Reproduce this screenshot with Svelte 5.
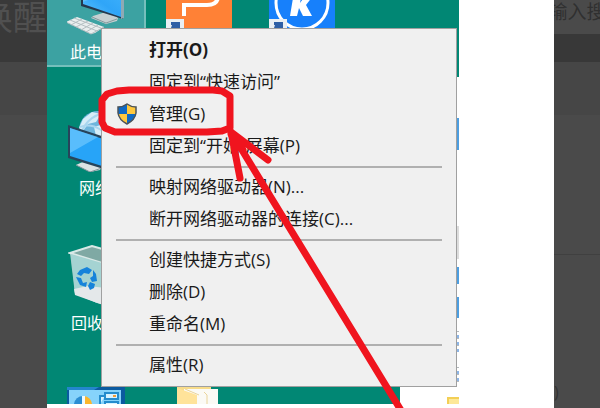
<script>
  /**
   * Context menu groups, a separator is drawn between them
   */
  const groups = [
    [
      { label: '打开(O)', primary: true },
      { label: '固定到“快速访问”' },
      { label: '管理(G)', shield: true },
      { label: '固定到“开始”屏幕(P)' }
    ],
    [{ label: '映射网络驱动器(N)...' }, { label: '断开网络驱动器的连接(C)...' }],
    [{ label: '创建快捷方式(S)' }, { label: '删除(D)' }, { label: '重命名(M)' }],
    [{ label: '属性(R)' }]
  ];
</script>

<div class="page">
  <aside class="dim dim-left">
    <div class="dim-head"><span>唤醒</span></div>
    <div class="dim-band"></div>
  </aside>

  <main class="viewer">
    <div class="desktop">
      <div class="window-behind">
        <i class="sliver blue" style="top: 41px; height: 32px"></i>
        <i class="sliver grey" style="top: 149px; height: 33px"></i>
        <i class="sliver blue" style="top: 190px; height: 17px"></i>
        <i class="sliver blue" style="top: 220px; height: 21px"></i>
        <i class="sliver dots" style="top: 254px; height: 21px"></i>
        <i class="sliver dots" style="top: 290px; height: 16px"></i>
        <i class="folder-corner"></i>
      </div>

      <div class="shortcut selected">
        <svg width="62" height="36" viewBox="0 0 62 36">
          <defs>
            <linearGradient id="screen" x1="0" y1="1" x2="1" y2="0">
              <stop offset="0" stop-color="#5cc3ff" />
              <stop offset="0.5" stop-color="#2fa5f8" />
              <stop offset="1" stop-color="#3fb2fb" />
            </linearGradient>
          </defs>
          <path d="M26 16 42 11 51 18 50 21 39 24 24 18z" fill="#c6d0d2" />
          <path d="M25 17 39 23 50 19" fill="none" stroke="#839a9d" />
          <path d="M14-14 56-12V19L14 6z" fill="#25384d" />
          <path d="M16-12 54-10V17L16 4z" fill="url(#screen)" />
          <path d="M16 2V-10H46z" fill="#8bd6ff" opacity="0.4" />
          <path d="M54-12 57-11V18L54 19z" fill="#8fa9b4" />
          <path d="M-1 22 10 17 37 27 28 33 24 34z" fill="#e9eeee" />
          <path d="M-1 22 24 34 37 27M3 20 30 31M7 18 34 28M4 25 15 19M9 27 21 21M14 30 26 23M19 32 31 25" fill="none" stroke="#b4bec1" />
        </svg>
        <span class="caption">此电脑</span>
      </div>

      <div class="shortcut network">
        <svg width="62" height="62" viewBox="0 0 62 62">
          <circle cx="30" cy="20" r="19" fill="#6eb5dc" />
          <path d="M15 9 24 2 33 4 28 12 20 14 15 21 11 18zM26 17 39 13 40 28 28 26z" fill="#d6edf8" />
          <path d="M12 30C14 14 24 5 39 2M12 17C25 12 36 20 45 32" fill="none" stroke="#a9d6ef" stroke-width="2" />
          <path d="M8 55 19 50 35 53 32 60 22 62z" fill="#dbe2e4" />
          <path d="M8 55 22 62 34 58" fill="none" stroke="#81959c" />
          <path d="M0 15 52 32V64L0 48z" fill="#27445b" />
          <path d="M2 18 50 34V61L2 46z" fill="#27a4f8" />
          <path d="M2 18 30 27 2 43z" fill="#7ccfff" opacity="0.6" />
        </svg>
        <span class="caption net">网络</span>
      </div>

      <div class="shortcut bin">
        <svg width="62" height="62" viewBox="0 0 62 62">
          <path d="M2 8 24 1 52 9 43 62 29 58 7 49z" fill="#a9cfcc" />
          <path d="M2 8 24 1 52 9 34 18z" fill="#7fa9a4" stroke="#dae9e7" stroke-width="2" />
          <path d="M3 9 34 18 35 47 29 58 7 48z" fill="#a5d3d2" />
          <path d="M6 44 20 41 38 43V61L7 50z" fill="#e4e8ea" />
          <path d="M12 25 19 22 24 25 21 29 16 28 13 31 9 29zM8 32 13 33 15 38 19 37 18 42 12 40zM25 25 28 29 29 36 24 37 22 33 25 31zM20 41 22 37 27 39 26 43 22 45z" fill="#1683da" />
        </svg>
        <span class="caption">回收站</span>
      </div>

      <svg class="tile orange" width="66" height="28" viewBox="0 0 66 28">
        <rect width="66" height="28" fill="#ff8136" />
        <path d="M18 16V5H41Q52 5 52-4" fill="none" stroke="#fff" stroke-width="4" />
        <rect y="19" width="18" height="9" fill="#e9eff3" />
        <path d="M5 28 6 25H5V22H14V28z" fill="#2e5fa5" />
      </svg>

      <svg class="tile blue-k" width="66" height="28" viewBox="0 0 66 28">
        <rect width="66" height="28" fill="#1780fb" />
        <circle cx="33" cy="3" r="26" fill="none" stroke="#fff" stroke-width="3" />
        <path d="M25-8H33L31 3 39-8H47L37 5 43 16H34L30 8 28 16H21z" fill="#fff" />
        <rect y="19" width="18" height="9" fill="#e9eff3" />
        <path d="M5 28 6 25H5V22H14V28z" fill="#2e5fa5" />
      </svg>

      <svg class="tile control-panel" width="58" height="17" viewBox="0 0 58 17">
        <rect width="58" height="17" fill="#0b5aa0" />
        <path d="M0 0H32L27 3H0z" fill="#2386cc" />
        <rect x="2" y="3" width="52" height="14" fill="#86d3fb" />
        <path d="M7 17A9 9 0 0 1 16 9V17z" fill="#2b8ed3" />
        <path d="M17 17V9A9 9 0 0 1 25 17z" fill="#fbb62c" />
        <path d="M15 9H18V17H15z" fill="#eefaff" />
        <path d="M38 6H51V12H38zM38 9H33V17M38 17V15H51V17" fill="#d8f3ff" stroke="#258ccd" stroke-width="2" />
        <path d="M46 9H49" stroke="#ef9b37" stroke-width="2" />
      </svg>

      <svg class="tile folder" width="42" height="17" viewBox="0 0 42 17">
        <path d="M0 0H34V3H41V17H0z" fill="#f8dc8a" />
        <path d="M7 2H41V17H7z" fill="#fbfaf5" />
        <path d="M0 1 20 8V17H0z" fill="#ffe39a" />
        <path d="M8 2 22 8M27 5 30 8V17" fill="none" stroke="#ead49a" />
      </svg>

      <div class="menu" role="menu" aria-label="此电脑">
        {#each groups as group, i}
          {#if i > 0}
            <hr />
          {/if}
          {#each group as item}
            <button class="menu-item" class:primary={item.primary} role="menuitem">
              <span class="menu-icon">
                {#if item.shield}
                  <svg width="20" height="22" viewBox="0 0 20 22">
                    <path d="M10 1Q14 4 19 4V10Q18 17 10 21Q2 17 1 10V4Q6 4 10 1z" fill="#ffc83d" />
                    <path d="M10 1V11H1V4Q6 4 10 1z" fill="#0f69c4" />
                    <path d="M10 11H19Q18 17 10 21z" fill="#0f69c4" />
                    <path d="M10 1Q14 4 19 4V10Q18 17 10 21Q2 17 1 10V4Q6 4 10 1z" fill="none" stroke="#4b5359" stroke-width="1.5" />
                  </svg>
                {/if}
              </span>
              {item.label}
            </button>
          {/each}
        {/each}
      </div>

      <!-- Hand-drawn marker over the menu -->
      <svg class="marker" width="412" height="408" viewBox="0 0 412 408">
        <path d="M60 94 70 91 82 90H166L175 91 183 96V128L175 131 160 132H82L68 132 58 128 55 122V100z" />
        <path d="M184 132 355 412M184 132 193 178M184 132 221 160M185 134 196 150M184 134 189 148" />
      </svg>
    </div>
  </main>

  <aside class="dim dim-right">
    <div class="search"><span>输入搜</span></div>
    <div class="nav"></div>
    <div class="dim-band"></div>
    <div class="block"></div>
    <div class="rest"><span>)</span></div>
  </aside>
</div>

<style>
  :global(body) {
    margin: 0;
    background: #4a4a4a;
  }

  .page {
    display: flex;
    min-height: 100vh;
    overflow: hidden;
    font-family: 'Open Sans', 'Noto Sans CJK SC', sans-serif;
  }

  /* Dimmed page on both sides */
  .dim {
    flex: 0 0 47px;
    overflow: hidden;
    background: #4a4a4a;
    color: #505050;
  }

  .dim-right {
    flex-basis: 46px;
    display: flex;
    flex-direction: column;
  }

  .dim-head {
    display: flex;
    justify-content: flex-end;
    height: 62px;
    background: #393939;
    font-size: 34px;
    line-height: 34px;
    white-space: nowrap;
  }

  .dim-band {
    height: 53px;
    background: #464646;
  }

  .search {
    display: flex;
    height: 34px;
    justify-content: center;
    color: #303030;
    font-size: 19px;
    line-height: 24px;
    white-space: nowrap;
  }

  .nav {
    height: 28px;
    background: #383838;
  }

  .block {
    height: 139px;
    border-bottom: 1px solid #404040;
  }

  .rest {
    flex: 1;
    display: flex;
    align-items: flex-end;
    color: #333;
    font-size: 16px;
    line-height: 32px;
  }

  /* Opened image */
  .viewer {
    flex: 1;
    background: #fff;
  }

  .desktop {
    position: relative;
    width: 412px;
    height: 404px;
    background: #018774;
  }

  .window-behind {
    position: absolute;
    top: 77px;
    right: 0;
    bottom: 0;
    width: 59px;
    background: #fff;
  }

  .sliver {
    position: absolute;
    right: 0;
    width: 3px;
  }

  .sliver.blue {
    background: #4d9ee0;
  }

  .sliver.grey {
    background: #ddd;
  }

  .sliver.dots {
    background: repeating-linear-gradient(#b4b9bd 0 1px, #fff 1px 4px, #8db5e6 4px 7px);
  }

  .folder-corner {
    position: absolute;
    right: 0;
    bottom: 0;
    width: 10px;
    height: 5px;
    border: solid #f3cf56;
    border-width: 2px 0 0 2px;
    background: #fde898;
  }

  /* Desktop icons */
  .shortcut {
    position: absolute;
    left: 21px;
    display: flex;
    flex-direction: column;
    color: #fff;
  }

  .shortcut svg {
    display: block;
    flex-shrink: 0;
  }

  .selected {
    top: 0;
    left: 0;
    box-sizing: border-box;
    width: 99px;
    height: 67px;
    padding-left: 20px;
    border: solid #75bfbc;
    border-width: 0 2px 2px 0;
    background: #3ca2a2;
  }

  .network {
    top: 110px;
  }

  .bin {
    top: 245px;
  }

  .caption {
    padding-left: 3px;
    font-size: 16px;
    line-height: 32px;
    white-space: nowrap;
  }

  .caption.net {
    padding-left: 11px;
  }

  .tile {
    position: absolute;
    top: 0;
  }

  .orange {
    left: 119px;
  }

  .blue-k {
    left: 222px;
  }

  .control-panel,
  .folder {
    top: auto;
    bottom: 0;
  }

  .control-panel {
    left: 20px;
  }

  .folder {
    left: 130px;
  }

  /* Context menu */
  .menu {
    position: absolute;
    top: 28px;
    left: 54px;
    box-sizing: border-box;
    width: 356px;
    padding: 5px 0;
    border: 1px solid #a0a0a0;
    background: #f0f0f0;
  }

  .menu-item {
    display: flex;
    align-items: center;
    width: 100%;
    height: 32px;
    padding: 0;
    border: 0;
    background: none;
    color: #1a1a1a;
    font: inherit;
    font-size: 17px;
    line-height: 32px;
    text-align: left;
    white-space: nowrap;
  }

  .menu-item.primary {
    font-weight: 700;
  }

  .menu-item:hover {
    background: #fff;
  }

  .menu-icon {
    display: flex;
    box-sizing: border-box;
    width: 47px;
    padding-left: 15px;
  }

  .menu hr {
    height: 2px;
    margin: 4px 14px 3px;
    border: 0;
    background: #b0b0b0;
  }

  .marker {
    position: absolute;
    top: 0;
    left: 0;
    fill: none;
    stroke: #f0141e;
    stroke-width: 7;
    stroke-linecap: round;
    stroke-linejoin: round;
    pointer-events: none;
  }
</style>
